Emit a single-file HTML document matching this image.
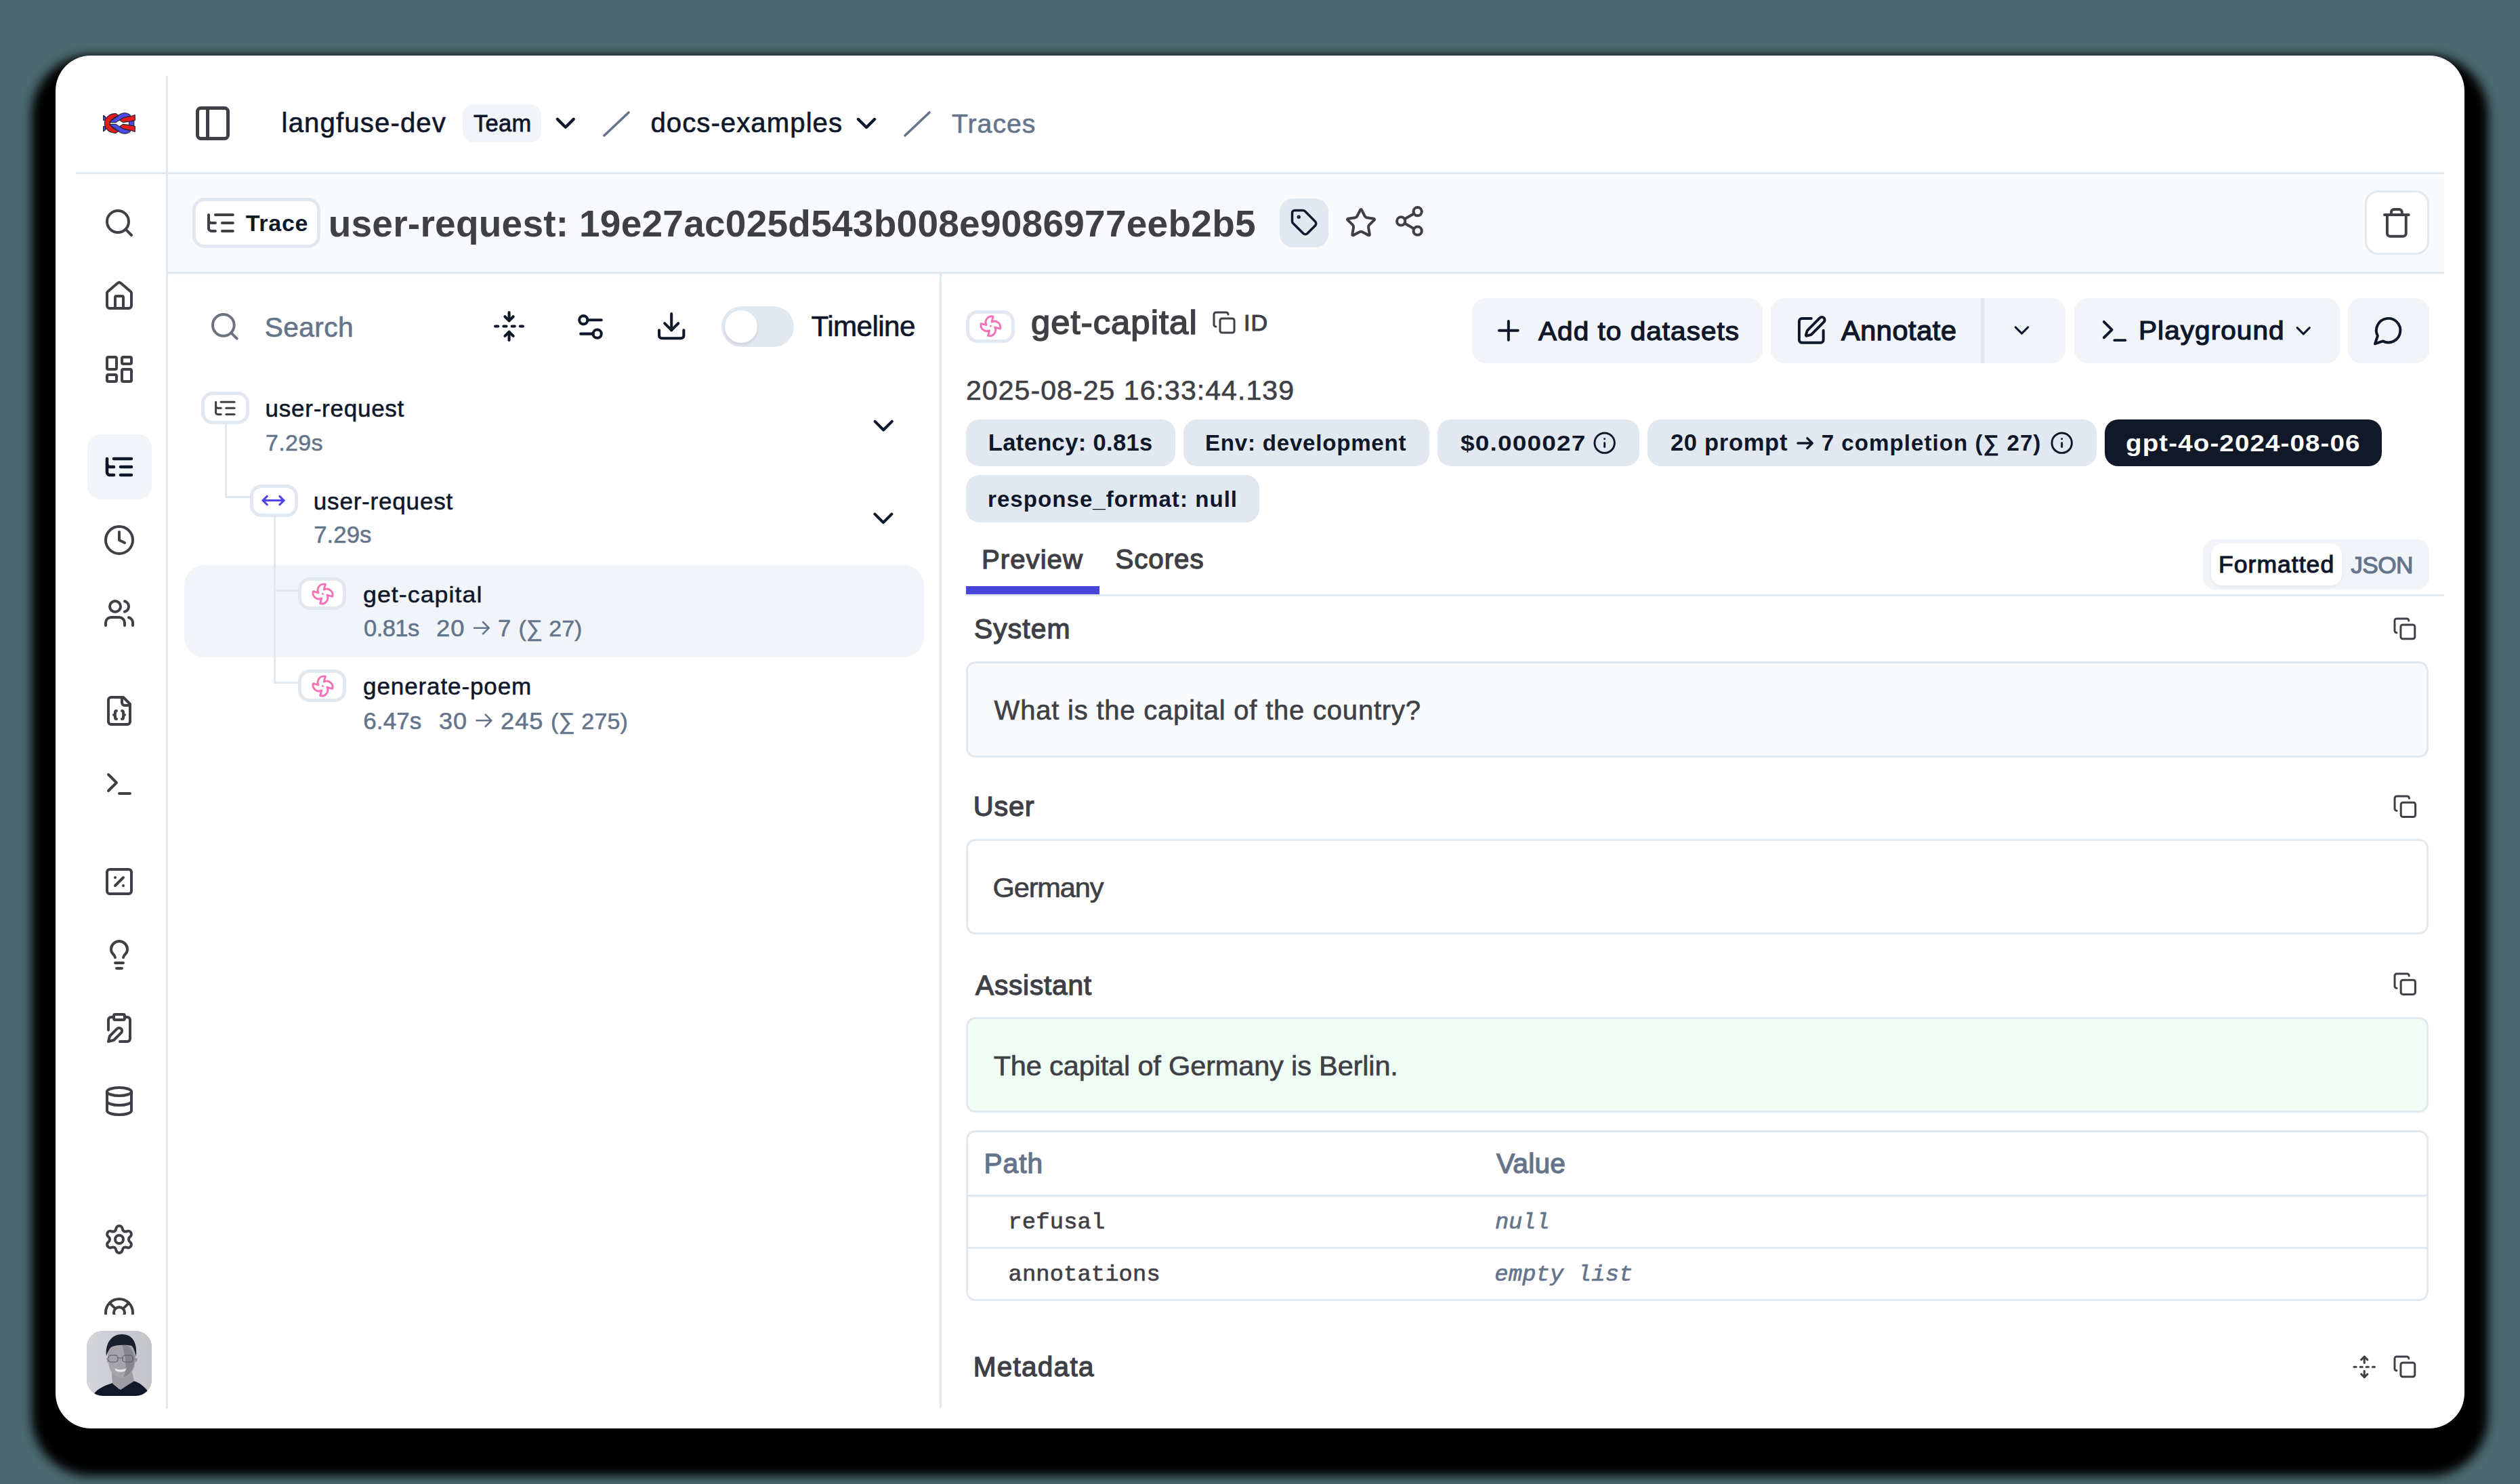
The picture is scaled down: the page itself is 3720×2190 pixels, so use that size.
<!DOCTYPE html>
<html><head><meta charset="utf-8"><title>Langfuse trace</title><style>
html,body{margin:0;padding:0}
body{width:3720px;height:2190px;background:#4b6970;position:relative;overflow:hidden;font-family:'Liberation Sans',sans-serif}
#win{position:absolute;left:82px;top:82px;width:3556px;height:2026px;background:#fff;border-radius:52px;box-shadow:0 35px 15px 35px #000}
.t{position:absolute;white-space:pre;line-height:1}
.b{position:absolute;box-sizing:border-box}
.i{position:absolute;overflow:visible}
</style></head>
<body>
<div id="win"></div>
<div class="b" style="left:245.00px;top:112.00px;width:3.00px;height:1966.00px;background:#e2e8f0;border-radius:0px"></div>
<div class="b" style="left:112.00px;top:254.00px;width:3496.00px;height:3.00px;background:#e2e8f0;border-radius:0px"></div>
<svg class="i" style="left:152px;top:166px" width="48" height="32" viewBox="0 0 48 32">
<g stroke="#23232e" stroke-width="1.1" stroke-linejoin="round">
<path d="M0.6 4.2 L3.9 6.8 L4.2 11.2 L0.6 11.4 Z" fill="#4b4ae6"/>
<path d="M0.6 20.6 L4.2 20.8 L3.9 25.2 L0.6 27.8 Z" fill="#4b4ae6"/>
<path d="M38.4 11.6 L45.8 11.6 L45.8 20.4 L38.4 20.4 Z" fill="#4b4ae6"/>
<path d="M19 1.6 C9 1.6 2.4 8 2.4 16 C2.4 24 9 30.4 19 30.4 L23.2 27.6 C17.5 25.8 13.2 22 10.2 18.2 L10.2 13.8 C13.2 10 17.5 6.2 23.2 4.4 Z" fill="#e11d1d"/>
<path d="M10.2 13.8 L22.4 4.8 C25.6 2.2 28.8 0.8 32 0.8 C36 0.8 39.2 2.4 41.4 5.6 C37 6 31 6.6 27.4 9.4 L19.2 14.6 L10.2 14.6 Z" fill="#4b4ae6"/>
<path d="M10.2 18.2 L22.4 27.2 C25.6 29.8 28.8 31.2 32 31.2 C36 31.2 39.2 29.6 41.4 26.4 C37 26 31 25.4 27.4 22.6 L19.2 17.4 L10.2 17.4 Z" fill="#4b4ae6"/>
<path d="M24.8 11.6 C28 8.2 33 6.4 41 5.8 L47.2 3.6 L47.4 11.2 L45.6 12 L38.6 13.4 L29.4 14.6 Z" fill="#e11d1d"/>
<path d="M24.8 20.4 C28 23.8 33 25.6 41 26.2 L47.2 28.4 L47.4 20.8 L45.6 20 L38.6 18.6 L29.4 17.4 Z" fill="#e11d1d"/>
</g></svg>
<div class="b" style="left:128.50px;top:641.00px;width:95.50px;height:96.00px;background:#f1f5f9;border-radius:20px"></div>
<svg class="i" style="left:152px;top:305px" width="48" height="48" viewBox="0 0 24 24" fill="none" stroke="#3f3f46" stroke-width="2" stroke-linecap="round" stroke-linejoin="round"><circle cx="11" cy="11" r="8"/><path d="m21 21-4.3-4.3"/></svg>
<svg class="i" style="left:152px;top:413px" width="48" height="48" viewBox="0 0 24 24" fill="none" stroke="#3f3f46" stroke-width="2" stroke-linecap="round" stroke-linejoin="round"><path d="M15 21v-8a1 1 0 0 0-1-1h-4a1 1 0 0 0-1 1v8"/><path d="M3 10a2 2 0 0 1 .709-1.528l7-5.999a2 2 0 0 1 2.582 0l7 5.999A2 2 0 0 1 21 10v9a2 2 0 0 1-2 2H5a2 2 0 0 1-2-2z"/></svg>
<svg class="i" style="left:152px;top:521px" width="48" height="48" viewBox="0 0 24 24" fill="none" stroke="#3f3f46" stroke-width="2" stroke-linecap="round" stroke-linejoin="round"><rect width="7" height="9" x="3" y="3" rx="1"/><rect width="7" height="5" x="14" y="3" rx="1"/><rect width="7" height="9" x="14" y="12" rx="1"/><rect width="7" height="5" x="3" y="16" rx="1"/></svg>
<svg class="i" style="left:152px;top:665px" width="48" height="48" viewBox="0 0 24 24" fill="none" stroke="#0f172a" stroke-width="2.3" stroke-linecap="round" stroke-linejoin="round"><path d="M21 12h-8"/><path d="M21 6H8"/><path d="M21 18h-8"/><path d="M3 6v4c0 1.1.9 2 2 2h3"/><path d="M3 10v6c0 1.1.9 2 2 2h3"/></svg>
<svg class="i" style="left:152px;top:773px" width="48" height="48" viewBox="0 0 24 24" fill="none" stroke="#3f3f46" stroke-width="2" stroke-linecap="round" stroke-linejoin="round"><circle cx="12" cy="12" r="10"/><polyline points="12 6 12 12 16 14"/></svg>
<svg class="i" style="left:152px;top:881px" width="48" height="48" viewBox="0 0 24 24" fill="none" stroke="#3f3f46" stroke-width="2" stroke-linecap="round" stroke-linejoin="round"><path d="M16 21v-2a4 4 0 0 0-4-4H6a4 4 0 0 0-4 4v2"/><circle cx="9" cy="7" r="4"/><path d="M22 21v-2a4 4 0 0 0-3-3.87"/><path d="M16 3.13a4 4 0 0 1 0 7.75"/></svg>
<svg class="i" style="left:152px;top:1025px" width="48" height="48" viewBox="0 0 24 24" fill="none" stroke="#3f3f46" stroke-width="2" stroke-linecap="round" stroke-linejoin="round"><path d="M15 2H6a2 2 0 0 0-2 2v16a2 2 0 0 0 2 2h12a2 2 0 0 0 2-2V7Z"/><path d="M14 2v4a2 2 0 0 0 2 2h4"/><path d="M10 12a1 1 0 0 0-1 1v1a1 1 0 0 1-1 1 1 1 0 0 1 1 1v1a1 1 0 0 0 1 1"/><path d="M14 18a1 1 0 0 0 1-1v-1a1 1 0 0 1 1-1 1 1 0 0 1-1-1v-1a1 1 0 0 0-1-1"/></svg>
<svg class="i" style="left:152px;top:1133px" width="48" height="48" viewBox="0 0 24 24" fill="none" stroke="#3f3f46" stroke-width="2" stroke-linecap="round" stroke-linejoin="round"><polyline points="4 17 10 11 4 5"/><line x1="12" x2="20" y1="19" y2="19"/></svg>
<svg class="i" style="left:152px;top:1277px" width="48" height="48" viewBox="0 0 24 24" fill="none" stroke="#3f3f46" stroke-width="2" stroke-linecap="round" stroke-linejoin="round"><rect width="18" height="18" x="3" y="3" rx="2"/><path d="m15 9-6 6"/><path d="M9 9h.01"/><path d="M15 15h.01"/></svg>
<svg class="i" style="left:152px;top:1385px" width="48" height="48" viewBox="0 0 24 24" fill="none" stroke="#3f3f46" stroke-width="2" stroke-linecap="round" stroke-linejoin="round"><path d="M15 14c.2-1 .7-1.7 1.5-2.5 1-.9 1.5-2.2 1.5-3.5A6 6 0 0 0 6 8c0 1 .2 2.2 1.5 3.5.7.7 1.3 1.5 1.5 2.5"/><path d="M9 18h6"/><path d="M10 22h4"/></svg>
<svg class="i" style="left:152px;top:1493px" width="48" height="48" viewBox="0 0 24 24" fill="none" stroke="#3f3f46" stroke-width="2" stroke-linecap="round" stroke-linejoin="round"><rect width="8" height="4" x="8" y="2" rx="1"/><path d="M10.4 12.6a2 2 0 0 1 3 3L8 21l-4 1 1-4Z"/><path d="M16 4h2a2 2 0 0 1 2 2v14a2 2 0 0 1-2 2h-5.5"/><path d="M4 13.5V6a2 2 0 0 1 2-2h2"/></svg>
<svg class="i" style="left:152px;top:1601px" width="48" height="48" viewBox="0 0 24 24" fill="none" stroke="#3f3f46" stroke-width="2" stroke-linecap="round" stroke-linejoin="round"><ellipse cx="12" cy="5" rx="9" ry="3"/><path d="M3 5V19A9 3 0 0 0 21 19V5"/><path d="M3 12A9 3 0 0 0 21 12"/></svg>
<svg class="i" style="left:152px;top:1805px" width="48" height="48" viewBox="0 0 24 24" fill="none" stroke="#3f3f46" stroke-width="2" stroke-linecap="round" stroke-linejoin="round"><path d="M9.671 4.136a2.34 2.34 0 0 1 4.659 0 2.34 2.34 0 0 0 3.319 1.915 2.34 2.34 0 0 1 2.33 4.033 2.34 2.34 0 0 0 0 3.831 2.34 2.34 0 0 1-2.33 4.033 2.34 2.34 0 0 0-3.319 1.915 2.34 2.34 0 0 1-4.659 0 2.34 2.34 0 0 0-3.32-1.915 2.34 2.34 0 0 1-2.33-4.033 2.34 2.34 0 0 0 0-3.831A2.34 2.34 0 0 1 6.35 6.051a2.34 2.34 0 0 0 3.319-1.915"/><circle cx="12" cy="12" r="3"/></svg>
<div class="b" style="left:140px;top:1900px;width:80px;height:40px;overflow:hidden"><svg class="i" style="left:12px;top:13px" width="48" height="48" viewBox="0 0 24 24" fill="none" stroke="#3f3f46" stroke-width="2" stroke-linecap="round" stroke-linejoin="round"><circle cx="12" cy="12" r="10"/><path d="m4.93 4.93 4.24 4.24"/><path d="m14.83 9.17 4.24-4.24"/><path d="m14.83 14.83 4.24 4.24"/><path d="m9.17 14.83-4.24 4.24"/><circle cx="12" cy="12" r="4"/></svg></div>
<div class="b" style="left:128px;top:1964px;width:96px;height:96px;border-radius:24px;overflow:hidden;background:#c8c9ce">
<svg width="96" height="96" viewBox="0 0 96 96" style="position:absolute;left:0;top:0">
<defs><linearGradient id="avbg" x1="0" x2="1" y1="0" y2="0"><stop offset="0" stop-color="#d3d5da"/><stop offset="0.45" stop-color="#cbcdd2"/><stop offset="1" stop-color="#c4c5ca"/></linearGradient></defs>
<rect width="96" height="96" fill="url(#avbg)"/>
<path d="M9 96 C12 88 24 81 38 77 L48 86 L70 74 C80 77 90 86 94 96 Z" fill="#121829"/>
<path d="M37 62 L67 60 L70 74 L50 87 L38 78 Z" fill="#9c9ca2"/>
<path d="M31 40 C30 22 38 13 52 13 C66 13 73 22 72 40 C72 56 66 68 52 69 C38 69 32 56 31 40 Z" fill="#a4a4aa"/>
<path d="M52 20 C62 20 70 28 71 42 C70 56 64 66 54 68 C60 58 58 40 52 20 Z" fill="#86868e"/>
<path d="M29 37 C27 18 37 5 52 5 C67 5 75 16 73 38 C71 30 69 24 66 22 C58 20 44 20 36 24 C33 27 31 31 29 37 Z" fill="#1a1f2e"/>
<rect x="32" y="36" width="14" height="10" rx="4" fill="none" stroke="#5a5a62" stroke-width="1.2"/><rect x="53" y="36" width="15" height="10" rx="4" fill="none" stroke="#5a5a62" stroke-width="1.2"/><path d="M46 40 L53 40" stroke="#5a5a62" stroke-width="1.2"/>
<path d="M41 55 C46 58 54 58 59 55 L57 59 C53 61 47 61 43 59 Z" fill="#e8e8ea"/>
<path d="M29 40 L31 48 L33 40 Z M71 40 L73 47 L75 41 Z" fill="#8e8e94"/>
</svg></div>
<svg class="i" style="left:284.00px;top:151.70px" width="60.00" height="60.00" viewBox="0 0 24 24" fill="none" stroke="#3f3f46" stroke-width="2" stroke-linecap="round" stroke-linejoin="round"><rect width="18" height="18" x="3" y="3" rx="2"/><path d="M9 3v18"/></svg>
<div class="b" style="left:683.00px;top:154.00px;width:116.00px;height:55.50px;background:#f1f5f9;border-radius:16px"></div>
<svg class="i" style="left:810.97px;top:158.17px" width="47.66" height="47.66" viewBox="0 0 24 24" fill="none" stroke="#0f172a" stroke-width="2.2" stroke-linecap="round" stroke-linejoin="round"><path d="m6 9 6 6 6-6"/></svg>
<svg class="i" style="left:885px;top:158px" width="50" height="50" viewBox="0 0 50 50"><path d="M7 42 L43 8" stroke="#64748b" stroke-width="3.6" stroke-linecap="round"/></svg>
<svg class="i" style="left:1255.00px;top:158.00px" width="48.00" height="48.00" viewBox="0 0 24 24" fill="none" stroke="#0f172a" stroke-width="2.2" stroke-linecap="round" stroke-linejoin="round"><path d="m6 9 6 6 6-6"/></svg>
<svg class="i" style="left:1329px;top:158px" width="50" height="50" viewBox="0 0 50 50"><path d="M7 42 L43 8" stroke="#64748b" stroke-width="3.6" stroke-linecap="round"/></svg>
<div class="b" style="left:248.00px;top:257.00px;width:3360.00px;height:144.00px;background:#f8fafc;border-radius:0px"></div>
<div class="b" style="left:248.00px;top:401.00px;width:3360.00px;height:3.00px;background:#e2e8f0;border-radius:0px;box-shadow:0 3px 6px rgba(15,23,42,0.035)"></div>
<div class="b" style="left:284.20px;top:292.20px;width:188.50px;height:73.40px;background:#fff;border-radius:18px;border:5.5px solid #e2e8f0"></div>
<svg class="i" style="left:302.02px;top:305.02px" width="47.85" height="47.85" viewBox="0 0 24 24" fill="none" stroke="#3f3f46" stroke-width="2" stroke-linecap="round" stroke-linejoin="round"><path d="M21 12h-8"/><path d="M21 6H8"/><path d="M21 18h-8"/><path d="M3 6v4c0 1.1.9 2 2 2h3"/><path d="M3 10v6c0 1.1.9 2 2 2h3"/></svg>
<div class="b" style="left:1889.00px;top:292.80px;width:72.00px;height:72.20px;background:#e2e8f0;border-radius:20px"></div>
<svg class="i" style="left:1903.61px;top:307.36px" width="42.27" height="42.27" viewBox="0 0 24 24" fill="none" stroke="#0f172a" stroke-width="2" stroke-linecap="round" stroke-linejoin="round"><path d="M12.586 2.586A2 2 0 0 0 11.172 2H4a2 2 0 0 0-2 2v7.172a2 2 0 0 0 .586 1.414l8.704 8.704a2.426 2.426 0 0 0 3.42 0l6.58-6.58a2.426 2.426 0 0 0 0-3.42z"/><circle cx="7.5" cy="7.5" r=".5" fill="currentColor"/></svg>
<svg class="i" style="left:1984.80px;top:304.90px" width="48.11" height="48.11" viewBox="0 0 24 24" fill="none" stroke="#3f3f46" stroke-width="2" stroke-linecap="round" stroke-linejoin="round"><path d="M11.525 2.295a.53.53 0 0 1 .95 0l2.31 4.679a2.123 2.123 0 0 0 1.595 1.16l5.166.756a.53.53 0 0 1 .294.904l-3.736 3.638a2.123 2.123 0 0 0-.611 1.878l.882 5.14a.53.53 0 0 1-.771.56l-4.618-2.428a2.122 2.122 0 0 0-1.973 0L6.396 21.01a.53.53 0 0 1-.77-.56l.881-5.139a2.122 2.122 0 0 0-.611-1.879L2.16 9.795a.53.53 0 0 1 .294-.906l5.165-.755a2.122 2.122 0 0 0 1.597-1.16z"/></svg>
<svg class="i" style="left:2056.33px;top:302.08px" width="48.85" height="48.85" viewBox="0 0 24 24" fill="none" stroke="#3f3f46" stroke-width="2" stroke-linecap="round" stroke-linejoin="round"><circle cx="18" cy="5" r="3"/><circle cx="6" cy="12" r="3"/><circle cx="18" cy="19" r="3"/><line x1="8.59" x2="15.42" y1="13.51" y2="17.49"/><line x1="15.41" x2="8.59" y1="6.51" y2="10.49"/></svg>
<div class="b" style="left:3490.50px;top:281.30px;width:95.10px;height:94.70px;background:#fff;border-radius:20px;border:3px solid #e2e8f0"></div>
<svg class="i" style="left:3514.02px;top:305.02px" width="47.66" height="47.66" viewBox="0 0 24 24" fill="none" stroke="#3f3f46" stroke-width="2" stroke-linecap="round" stroke-linejoin="round"><path d="M3 6h18"/><path d="M19 6v14c0 1-1 2-2 2H7c-1 0-2-1-2-2V6"/><path d="M8 6V4c0-1 1-2 2-2h4c1 0 2 1 2 2v2"/></svg>
<div class="b" style="left:1387.00px;top:404.00px;width:3.00px;height:1674.00px;background:#e2e8f0;border-radius:0px"></div>
<svg class="i" style="left:307.63px;top:457.63px" width="47.64" height="47.64" viewBox="0 0 24 24" fill="none" stroke="#6b7280" stroke-width="2" stroke-linecap="round" stroke-linejoin="round"><circle cx="11" cy="11" r="8"/><path d="m21 21-4.3-4.3"/></svg>
<svg class="i" style="left:726.95px;top:456.95px" width="49.09" height="49.09" viewBox="0 0 24 24" fill="none" stroke="#0f172a" stroke-width="2" stroke-linecap="round" stroke-linejoin="round"><path d="M12 22v-6"/><path d="M12 8V2"/><path d="M4 12H2"/><path d="M10 12H8"/><path d="M16 12h-2"/><path d="M22 12h-2"/><path d="m15 19-3-3-3 3"/><path d="m15 5-3 3-3-3"/></svg>
<svg class="i" style="left:847.03px;top:457.73px" width="48.93" height="48.93" viewBox="0 0 24 24" fill="none" stroke="#0f172a" stroke-width="2" stroke-linecap="round" stroke-linejoin="round"><path d="M20 7h-9"/><path d="M14 17H5"/><circle cx="17" cy="17" r="3"/><circle cx="7" cy="7" r="3"/></svg>
<svg class="i" style="left:967.29px;top:457.24px" width="48.42" height="48.42" viewBox="0 0 24 24" fill="none" stroke="#0f172a" stroke-width="2" stroke-linecap="round" stroke-linejoin="round"><path d="M21 15v4a2 2 0 0 1-2 2H5a2 2 0 0 1-2-2v-4"/><polyline points="7 10 12 15 17 10"/><line x1="12" x2="12" y1="15" y2="3"/></svg>
<div class="b" style="left:1064.70px;top:451.60px;width:107.30px;height:60.20px;background:#e2e8f0;border-radius:30px"></div>
<div class="b" style="left:1069.90px;top:457.90px;width:48.00px;height:48.00px;background:#fff;border-radius:24px;box-shadow:0 3px 4px rgba(15,23,42,0.10)"></div>
<div class="b" style="left:272.00px;top:834.00px;width:1091.60px;height:135.80px;background:#f1f5f9;border-radius:30px"></div>
<div class="b" style="left:332.00px;top:625.00px;width:3.00px;height:110.30px;background:#e2e8f0;border-radius:0px"></div>
<div class="b" style="left:332.00px;top:732.30px;width:38.00px;height:3.00px;background:#e2e8f0;border-radius:0px"></div>
<div class="b" style="left:404.00px;top:762.00px;width:3.00px;height:247.20px;background:#e2e8f0;border-radius:0px"></div>
<div class="b" style="left:404.00px;top:869.50px;width:38.00px;height:3.00px;background:#e2e8f0;border-radius:0px"></div>
<div class="b" style="left:404.00px;top:1006.20px;width:38.00px;height:3.00px;background:#e2e8f0;border-radius:0px"></div>
<div class="b" style="left:296.50px;top:578.00px;width:71.00px;height:47.70px;background:#fff;border-radius:17px;border:5px solid #e2e8f0"></div>
<div class="b" style="left:369.00px;top:715.00px;width:70.70px;height:47.50px;background:#fff;border-radius:17px;border:5px solid #e2e8f0"></div>
<div class="b" style="left:440.40px;top:852.30px;width:70.60px;height:47.70px;background:#fff;border-radius:17px;border:5px solid #e2e8f0"></div>
<div class="b" style="left:440.40px;top:988.00px;width:70.60px;height:47.50px;background:#fff;border-radius:17px;border:5px solid #e2e8f0"></div>
<svg class="i" style="left:313.55px;top:583.75px" width="36.61" height="36.61" viewBox="0 0 24 24" fill="none" stroke="#3f3f46" stroke-width="2" stroke-linecap="round" stroke-linejoin="round"><path d="M21 12h-8"/><path d="M21 6H8"/><path d="M21 18h-8"/><path d="M3 6v4c0 1.1.9 2 2 2h3"/><path d="M3 10v6c0 1.1.9 2 2 2h3"/></svg>
<svg class="i" style="left:385.43px;top:720.18px" width="37.15" height="37.15" viewBox="0 0 24 24" fill="none" stroke="#4f46e5" stroke-width="2" stroke-linecap="round" stroke-linejoin="round"><polyline points="18 8 22 12 18 16"/><polyline points="6 8 2 12 6 16"/><line x1="2" x2="22" y1="12" y2="12"/></svg>
<svg class="i" style="left:458.55px;top:858.55px" width="34.91" height="34.91" viewBox="0 0 24 24" fill="none" stroke="#f472b6" stroke-width="2" stroke-linecap="round" stroke-linejoin="round"><path d="M10.827 16.379a6.082 6.082 0 0 1-8.618-7.002l5.412 1.45a6.082 6.082 0 0 1 7.002-8.618l-1.45 5.412a6.082 6.082 0 0 1 8.618 7.002l-5.412-1.45a6.082 6.082 0 0 1-7.002 8.618l1.45-5.412Z"/><path d="M12 12v.01"/></svg>
<svg class="i" style="left:458.55px;top:994.55px" width="34.91" height="34.91" viewBox="0 0 24 24" fill="none" stroke="#f472b6" stroke-width="2" stroke-linecap="round" stroke-linejoin="round"><path d="M10.827 16.379a6.082 6.082 0 0 1-8.618-7.002l5.412 1.45a6.082 6.082 0 0 1 7.002-8.618l-1.45 5.412a6.082 6.082 0 0 1 8.618 7.002l-5.412-1.45a6.082 6.082 0 0 1-7.002 8.618l1.45-5.412Z"/><path d="M12 12v.01"/></svg>
<svg class="i" style="left:1278.67px;top:602.52px" width="50.36" height="50.36" viewBox="0 0 24 24" fill="none" stroke="#0f172a" stroke-width="2" stroke-linecap="round" stroke-linejoin="round"><path d="m6 9 6 6 6-6"/></svg>
<svg class="i" style="left:1278.97px;top:739.62px" width="49.76" height="49.76" viewBox="0 0 24 24" fill="none" stroke="#0f172a" stroke-width="2" stroke-linecap="round" stroke-linejoin="round"><path d="m6 9 6 6 6-6"/></svg>
<div class="b" style="left:1426.00px;top:458.00px;width:72.00px;height:47.70px;background:#fff;border-radius:17px;border:5px solid #e2e8f0"></div>
<svg class="i" style="left:1444.68px;top:464.43px" width="34.64" height="34.64" viewBox="0 0 24 24" fill="none" stroke="#f472b6" stroke-width="2" stroke-linecap="round" stroke-linejoin="round"><path d="M10.827 16.379a6.082 6.082 0 0 1-8.618-7.002l5.412 1.45a6.082 6.082 0 0 1 7.002-8.618l-1.45 5.412a6.082 6.082 0 0 1 8.618 7.002l-5.412-1.45a6.082 6.082 0 0 1-7.002 8.618l1.45-5.412Z"/><path d="M12 12v.01"/></svg>
<svg class="i" style="left:1789.17px;top:458.22px" width="36.05" height="36.05" viewBox="0 0 24 24" fill="none" stroke="#3f3f46" stroke-width="2" stroke-linecap="round" stroke-linejoin="round"><rect width="14" height="14" x="8" y="8" rx="2" ry="2"/><path d="M4 16c-1.1 0-2-.9-2-2V4c0-1.1.9-2 2-2h10c1.1 0 2 .9 2 2"/></svg>
<div class="b" style="left:2172.90px;top:440.00px;width:428.80px;height:96.00px;background:#f1f5f9;border-radius:20px"></div>
<div class="b" style="left:2614.00px;top:440.00px;width:435.40px;height:96.00px;background:#f1f5f9;border-radius:20px"></div>
<div class="b" style="left:3062.00px;top:440.00px;width:391.70px;height:96.00px;background:#f1f5f9;border-radius:20px"></div>
<div class="b" style="left:3465.70px;top:440.00px;width:120.00px;height:96.00px;background:#f1f5f9;border-radius:20px"></div>
<div class="b" style="left:2923.70px;top:440.00px;width:6.30px;height:96.00px;background:#e2e8f0;border-radius:0px"></div>
<svg class="i" style="left:2203.15px;top:464.35px" width="47.70" height="47.70" viewBox="0 0 24 24" fill="none" stroke="#0f172a" stroke-width="2" stroke-linecap="round" stroke-linejoin="round"><path d="M5 12h14"/><path d="M12 5v14"/></svg>
<svg class="i" style="left:2650.21px;top:463.84px" width="47.60" height="47.60" viewBox="0 0 24 24" fill="none" stroke="#0f172a" stroke-width="2" stroke-linecap="round" stroke-linejoin="round"><path d="M12 3H5a2 2 0 0 0-2 2v14a2 2 0 0 0 2 2h14a2 2 0 0 0 2-2v-7"/><path d="M18.375 2.625a1 1 0 0 1 3 3l-9.013 9.014a2 2 0 0 1-.853.505l-2.873.84a.5.5 0 0 1-.62-.62l.84-2.873a2 2 0 0 1 .506-.852z"/></svg>
<svg class="i" style="left:2965.50px;top:469.35px" width="37.01" height="37.01" viewBox="0 0 24 24" fill="none" stroke="#0f172a" stroke-width="2" stroke-linecap="round" stroke-linejoin="round"><path d="m6 9 6 6 6-6"/></svg>
<svg class="i" style="left:3098.38px;top:464.53px" width="46.95" height="46.95" viewBox="0 0 24 24" fill="none" stroke="#0f172a" stroke-width="2" stroke-linecap="round" stroke-linejoin="round"><polyline points="4 17 10 11 4 5"/><line x1="12" x2="20" y1="19" y2="19"/></svg>
<svg class="i" style="left:3381.75px;top:469.60px" width="36.49" height="36.49" viewBox="0 0 24 24" fill="none" stroke="#0f172a" stroke-width="2" stroke-linecap="round" stroke-linejoin="round"><path d="m6 9 6 6 6-6"/></svg>
<svg class="i" style="left:3502.21px;top:463.89px" width="47.26" height="47.26" viewBox="0 0 24 24" fill="none" stroke="#0f172a" stroke-width="2" stroke-linecap="round" stroke-linejoin="round"><path d="M7.9 20A9 9 0 1 0 4 16.1L2 22Z"/></svg>
<div class="b" style="left:1426.20px;top:619.00px;width:308.70px;height:68.50px;background:#e2e8f0;border-radius:20px"></div>
<div class="b" style="left:1747.00px;top:619.00px;width:362.70px;height:68.50px;background:#e2e8f0;border-radius:20px"></div>
<div class="b" style="left:2122.30px;top:619.00px;width:297.70px;height:68.50px;background:#e2e8f0;border-radius:20px"></div>
<div class="b" style="left:2431.80px;top:619.00px;width:662.80px;height:68.50px;background:#e2e8f0;border-radius:20px"></div>
<div class="b" style="left:1426.20px;top:700.50px;width:432.50px;height:70.50px;background:#e2e8f0;border-radius:20px"></div>
<div class="b" style="left:3106.80px;top:619.00px;width:409.00px;height:68.50px;background:#111827;border-radius:20px"></div>
<svg class="i" style="left:2351.33px;top:635.93px" width="35.35" height="35.35" viewBox="0 0 24 24" fill="none" stroke="#0f172a" stroke-width="2" stroke-linecap="round" stroke-linejoin="round"><circle cx="12" cy="12" r="10"/><path d="M12 16v-4"/><path d="M12 8h.01"/></svg>
<svg class="i" style="left:3026.33px;top:635.93px" width="35.35" height="35.35" viewBox="0 0 24 24" fill="none" stroke="#0f172a" stroke-width="2" stroke-linecap="round" stroke-linejoin="round"><circle cx="12" cy="12" r="10"/><path d="M12 16v-4"/><path d="M12 8h.01"/></svg>
<div class="b" style="left:1426.00px;top:877.00px;width:2182.00px;height:3.00px;background:#e2e8f0;border-radius:0px"></div>
<div class="b" style="left:1426.00px;top:865.00px;width:196.60px;height:12.00px;background:#4845dd;border-radius:0px"></div>
<div class="b" style="left:3252.00px;top:796.00px;width:334.00px;height:74.00px;background:#f1f5f9;border-radius:18px"></div>
<div class="b" style="left:3263.80px;top:801.80px;width:193.50px;height:62.40px;background:#fff;border-radius:16px;box-shadow:0 2px 4px rgba(0,0,0,0.06)"></div>
<svg class="i" style="left:3532.11px;top:909.81px" width="35.78" height="35.78" viewBox="0 0 24 24" fill="none" stroke="#3f3f46" stroke-width="2" stroke-linecap="round" stroke-linejoin="round"><rect width="14" height="14" x="8" y="8" rx="2" ry="2"/><path d="M4 16c-1.1 0-2-.9-2-2V4c0-1.1.9-2 2-2h10c1.1 0 2 .9 2 2"/></svg>
<div class="b" style="left:1426.30px;top:976.40px;width:2158.70px;height:141.20px;background:#f8fafc;border-radius:14px;border:3px solid #e2e8f0"></div>
<svg class="i" style="left:3531.67px;top:1171.67px" width="36.65" height="36.65" viewBox="0 0 24 24" fill="none" stroke="#3f3f46" stroke-width="2" stroke-linecap="round" stroke-linejoin="round"><rect width="14" height="14" x="8" y="8" rx="2" ry="2"/><path d="M4 16c-1.1 0-2-.9-2-2V4c0-1.1.9-2 2-2h10c1.1 0 2 .9 2 2"/></svg>
<div class="b" style="left:1426.30px;top:1238.00px;width:2158.70px;height:141.30px;background:#fff;border-radius:14px;border:3px solid #e2e8f0"></div>
<svg class="i" style="left:3531.78px;top:1433.58px" width="36.44" height="36.44" viewBox="0 0 24 24" fill="none" stroke="#3f3f46" stroke-width="2" stroke-linecap="round" stroke-linejoin="round"><rect width="14" height="14" x="8" y="8" rx="2" ry="2"/><path d="M4 16c-1.1 0-2-.9-2-2V4c0-1.1.9-2 2-2h10c1.1 0 2 .9 2 2"/></svg>
<div class="b" style="left:1426.30px;top:1500.50px;width:2158.70px;height:141.50px;background:#f0fdf4;border-radius:14px;border:3px solid #e2e8f0"></div>
<div class="b" style="left:1426.30px;top:1667.50px;width:2158.70px;height:252.80px;background:#fff;border-radius:14px;border:3px solid #e2e8f0"></div>
<div class="b" style="left:1429.00px;top:1762.50px;width:2153.00px;height:3.00px;background:#e2e8f0;border-radius:0px"></div>
<div class="b" style="left:1429.00px;top:1839.50px;width:2153.00px;height:3.00px;background:#e2e8f0;border-radius:0px"></div>
<svg class="i" style="left:3471.80px;top:1998.75px" width="36.49" height="36.49" viewBox="0 0 24 24" fill="none" stroke="#3f3f46" stroke-width="2" stroke-linecap="round" stroke-linejoin="round"><path d="M12 22v-6"/><path d="M12 8V2"/><path d="M4 12H2"/><path d="M10 12H8"/><path d="M16 12h-2"/><path d="M22 12h-2"/><path d="m15 19-3 3-3-3"/><path d="m15 5-3-3-3 3"/></svg>
<svg class="i" style="left:3532.11px;top:1999.31px" width="35.78" height="35.78" viewBox="0 0 24 24" fill="none" stroke="#3f3f46" stroke-width="2" stroke-linecap="round" stroke-linejoin="round"><rect width="14" height="14" x="8" y="8" rx="2" ry="2"/><path d="M4 16c-1.1 0-2-.9-2-2V4c0-1.1.9-2 2-2h10c1.1 0 2 .9 2 2"/></svg>
<svg class="i" style="left:0;top:0" width="1" height="1"><path d="M700.00 926.70 H721.70 M713.00 918.00 L721.70 926.70 L713.00 935.40" stroke="#64748b" stroke-width="2.6" fill="none" stroke-linecap="round" stroke-linejoin="round"/></svg>
<svg class="i" style="left:0;top:0" width="1" height="1"><path d="M703.50 1063.30 H725.40 M716.70 1054.60 L725.40 1063.30 L716.70 1072.00" stroke="#64748b" stroke-width="2.6" fill="none" stroke-linecap="round" stroke-linejoin="round"/></svg>
<svg class="i" style="left:0;top:0" width="1" height="1"><path d="M2653.90 654.05 H2675.30 M2667.85 646.60 L2675.30 654.05 L2667.85 661.50" stroke="#0f172a" stroke-width="3.4" fill="none" stroke-linecap="round" stroke-linejoin="round"/></svg>
<div class="t" style="left:415.59px;top:161.88px;font-size:40.14px;letter-spacing:1.14px;color:#0f172a;font-family:'Liberation Sans';font-weight:400;-webkit-text-stroke:0.64px #0f172a">langfuse-dev</div>
<div class="t" style="left:699.11px;top:164.98px;font-size:34.49px;letter-spacing:0.24px;color:#0f172a;font-family:'Liberation Sans';font-weight:400;-webkit-text-stroke:0.76px #0f172a">Team</div>
<div class="t" style="left:960.39px;top:161.88px;font-size:40.14px;letter-spacing:1.07px;color:#0f172a;font-family:'Liberation Sans';font-weight:400;-webkit-text-stroke:0.64px #0f172a">docs-examples</div>
<div class="t" style="left:1404.92px;top:163.60px;font-size:38.12px;letter-spacing:1.00px;color:#64748b;font-family:'Liberation Sans';font-weight:400;transform:scaleX(1.0277);transform-origin:0 0;-webkit-text-stroke:0.61px #64748b">Traces</div>
<div class="t" style="left:362.66px;top:312.00px;font-size:34.00px;letter-spacing:0.74px;color:#0f172a;font-family:'Liberation Sans';font-weight:700">Trace</div>
<div class="t" style="left:484.70px;top:303.25px;font-size:55.00px;letter-spacing:0.25px;color:#3f3f46;font-family:'Liberation Sans';font-weight:700">user-request: 19e27ac025d543b008e9086977eeb2b5</div>
<div class="t" style="left:390.77px;top:462.62px;font-size:40.68px;letter-spacing:0.38px;color:#64748b;font-family:'Liberation Sans';font-weight:400;-webkit-text-stroke:0.65px #64748b">Search</div>
<div class="t" style="left:1197.56px;top:460.94px;font-size:42.19px;letter-spacing:-0.56px;color:#0f172a;font-family:'Liberation Sans';font-weight:400;-webkit-text-stroke:0.68px #0f172a">Timeline</div>
<div class="t" style="left:391.60px;top:585.05px;font-size:35.00px;letter-spacing:0.75px;color:#0f172a;font-family:'Liberation Sans';font-weight:400;-webkit-text-stroke:0.56px #0f172a">user-request</div>
<div class="t" style="left:392.00px;top:636.00px;font-size:34.00px;letter-spacing:0.31px;color:#64748b;font-family:'Liberation Sans';font-weight:400;-webkit-text-stroke:0.54px #64748b">7.29s</div>
<div class="t" style="left:462.80px;top:722.45px;font-size:35.00px;letter-spacing:0.81px;color:#0f172a;font-family:'Liberation Sans';font-weight:400;-webkit-text-stroke:0.56px #0f172a">user-request</div>
<div class="t" style="left:463.16px;top:772.39px;font-size:34.71px;letter-spacing:0.09px;color:#64748b;font-family:'Liberation Sans';font-weight:400;-webkit-text-stroke:0.56px #64748b">7.29s</div>
<div class="t" style="left:535.77px;top:860.67px;font-size:33.56px;letter-spacing:1.00px;color:#0f172a;font-family:'Liberation Sans';font-weight:400;transform:scaleX(1.0640);transform-origin:0 0;-webkit-text-stroke:0.54px #0f172a">get-capital</div>
<div class="t" style="left:536.96px;top:909.81px;font-size:34.57px;letter-spacing:-0.55px;color:#64748b;font-family:'Liberation Sans';font-weight:400;-webkit-text-stroke:0.55px #64748b">0.81s</div>
<div class="t" style="left:643.98px;top:909.81px;font-size:34.57px;letter-spacing:1.00px;color:#64748b;font-family:'Liberation Sans';font-weight:400;transform:scaleX(1.0542);transform-origin:0 0;-webkit-text-stroke:0.55px #64748b">20</div>
<div class="t" style="left:734.97px;top:909.81px;font-size:34.57px;letter-spacing:0.40px;color:#64748b;font-family:'Liberation Sans';font-weight:400;-webkit-text-stroke:0.55px #64748b">7</div>
<div class="t" style="left:765.46px;top:910.30px;font-size:34.00px;letter-spacing:-0.06px;color:#64748b;font-family:'Liberation Sans';font-weight:400;-webkit-text-stroke:0.54px #64748b">(∑ 27)</div>
<div class="t" style="left:536.10px;top:995.25px;font-size:35.00px;letter-spacing:0.89px;color:#0f172a;font-family:'Liberation Sans';font-weight:400;-webkit-text-stroke:0.56px #0f172a">generate-poem</div>
<div class="t" style="left:536.25px;top:1046.45px;font-size:35.00px;letter-spacing:0.12px;color:#64748b;font-family:'Liberation Sans';font-weight:400;-webkit-text-stroke:0.56px #64748b">6.47s</div>
<div class="t" style="left:647.72px;top:1046.45px;font-size:35.00px;letter-spacing:1.00px;color:#64748b;font-family:'Liberation Sans';font-weight:400;transform:scaleX(1.0296);transform-origin:0 0;-webkit-text-stroke:0.56px #64748b">30</div>
<div class="t" style="left:738.99px;top:1046.45px;font-size:35.00px;letter-spacing:1.00px;color:#64748b;font-family:'Liberation Sans';font-weight:400;transform:scaleX(1.0329);transform-origin:0 0;-webkit-text-stroke:0.56px #64748b">245</div>
<div class="t" style="left:812.96px;top:1047.30px;font-size:34.00px;letter-spacing:0.13px;color:#64748b;font-family:'Liberation Sans';font-weight:400;-webkit-text-stroke:0.54px #64748b">(∑ 275)</div>
<div class="t" style="left:1522.27px;top:451.93px;font-size:49.73px;letter-spacing:1.00px;color:#3f3f46;font-family:'Liberation Sans';font-weight:400;transform:scaleX(1.0221);transform-origin:0 0;-webkit-text-stroke:1.59px #3f3f46">get-capital</div>
<div class="t" style="left:1835.93px;top:460.76px;font-size:32.75px;letter-spacing:1.00px;color:#3f3f46;font-family:'Liberation Sans';font-weight:400;transform:scaleX(1.0413);transform-origin:0 0;-webkit-text-stroke:1.05px #3f3f46">ID</div>
<div class="t" style="left:2270.60px;top:468.60px;font-size:39.18px;letter-spacing:1.00px;color:#0f172a;font-family:'Liberation Sans';font-weight:400;transform:scaleX(1.0344);transform-origin:0 0;-webkit-text-stroke:1.25px #0f172a">Add to datasets</div>
<div class="t" style="left:2718.00px;top:466.67px;font-size:41.45px;letter-spacing:0.58px;color:#0f172a;font-family:'Liberation Sans';font-weight:400;-webkit-text-stroke:1.33px #0f172a">Annotate</div>
<div class="t" style="left:3156.76px;top:469.05px;font-size:38.77px;letter-spacing:1.00px;color:#0f172a;font-family:'Liberation Sans';font-weight:400;transform:scaleX(1.0459);transform-origin:0 0;-webkit-text-stroke:1.24px #0f172a">Playground</div>
<div class="t" style="left:1425.84px;top:557.48px;font-size:40.14px;letter-spacing:1.00px;color:#3f3f46;font-family:'Liberation Sans';font-weight:400;transform:scaleX(1.0239);transform-origin:0 0;-webkit-text-stroke:0.64px #3f3f46">2025-08-25 16:33:44.139</div>
<div class="t" style="left:1458.83px;top:635.81px;font-size:34.57px;letter-spacing:0.32px;color:#0f172a;font-family:'Liberation Sans';font-weight:700">Latency: 0.81s</div>
<div class="t" style="left:1779.01px;top:637.02px;font-size:33.15px;letter-spacing:0.74px;color:#0f172a;font-family:'Liberation Sans';font-weight:700">Env: development</div>
<div class="t" style="left:2156.13px;top:637.77px;font-size:32.27px;letter-spacing:1.00px;color:#0f172a;font-family:'Liberation Sans';font-weight:700;transform:scaleX(1.1487);transform-origin:0 0">$0.000027</div>
<div class="t" style="left:2465.96px;top:635.81px;font-size:34.57px;letter-spacing:0.67px;color:#0f172a;font-family:'Liberation Sans';font-weight:700">20 prompt</div>
<div class="t" style="left:2688.67px;top:637.02px;font-size:33.15px;letter-spacing:1.02px;color:#0f172a;font-family:'Liberation Sans';font-weight:700">7 completion (∑ 27)</div>
<div class="t" style="left:3138.46px;top:635.75px;font-size:35.00px;letter-spacing:1.00px;color:#ffffff;font-family:'Liberation Sans';font-weight:700;transform:scaleX(1.1019);transform-origin:0 0">gpt-4o-2024-08-06</div>
<div class="t" style="left:1458.01px;top:720.22px;font-size:33.15px;letter-spacing:1.00px;color:#0f172a;font-family:'Liberation Sans';font-weight:700">response_format: null</div>
<div class="t" style="left:1448.79px;top:805.78px;font-size:39.32px;letter-spacing:1.00px;color:#3f3f46;font-family:'Liberation Sans';font-weight:400;transform:scaleX(1.0212);transform-origin:0 0;-webkit-text-stroke:1.26px #3f3f46">Preview</div>
<div class="t" style="left:1646.38px;top:804.84px;font-size:40.42px;letter-spacing:0.90px;color:#3f3f46;font-family:'Liberation Sans';font-weight:400;-webkit-text-stroke:1.29px #3f3f46">Scores</div>
<div class="t" style="left:3275.46px;top:816.39px;font-size:34.25px;letter-spacing:1.00px;color:#0f172a;font-family:'Liberation Sans';font-weight:400;transform:scaleX(1.0370);transform-origin:0 0;-webkit-text-stroke:1.10px #0f172a">Formatted</div>
<div class="t" style="left:3470.35px;top:815.57px;font-size:35.21px;letter-spacing:-0.64px;color:#64748b;font-family:'Liberation Sans';font-weight:400;-webkit-text-stroke:1.13px #64748b">JSON</div>
<div class="t" style="left:1437.97px;top:908.28px;font-size:40.85px;letter-spacing:1.09px;color:#3f3f46;font-family:'Liberation Sans';font-weight:400;-webkit-text-stroke:1.31px #3f3f46">System</div>
<div class="t" style="left:1467.60px;top:1028.20px;font-size:40.00px;letter-spacing:0.79px;color:#3f3f46;font-family:'Liberation Sans';font-weight:400;-webkit-text-stroke:0.64px #3f3f46">What is the capital of the country?</div>
<div class="t" style="left:1436.70px;top:1168.77px;font-size:41.45px;letter-spacing:0.78px;color:#3f3f46;font-family:'Liberation Sans';font-weight:400;-webkit-text-stroke:1.33px #3f3f46">User</div>
<div class="t" style="left:1465.52px;top:1288.96px;font-size:41.57px;letter-spacing:-1.16px;color:#3f3f46;font-family:'Liberation Sans';font-weight:400;-webkit-text-stroke:0.67px #3f3f46">Germany</div>
<div class="t" style="left:1440.00px;top:1433.82px;font-size:40.68px;letter-spacing:0.77px;color:#3f3f46;font-family:'Liberation Sans';font-weight:400;-webkit-text-stroke:1.30px #3f3f46">Assistant</div>
<div class="t" style="left:1466.67px;top:1552.02px;font-size:41.51px;letter-spacing:-0.15px;color:#3f3f46;font-family:'Liberation Sans';font-weight:400;-webkit-text-stroke:0.66px #3f3f46">The capital of Germany is Berlin.</div>
<div class="t" style="left:1452.45px;top:1697.02px;font-size:40.68px;letter-spacing:0.98px;color:#64748b;font-family:'Liberation Sans';font-weight:400;-webkit-text-stroke:1.30px #64748b">Path</div>
<div class="t" style="left:2209.00px;top:1697.02px;font-size:40.68px;letter-spacing:0.21px;color:#64748b;font-family:'Liberation Sans';font-weight:400;-webkit-text-stroke:1.30px #64748b">Value</div>
<div class="t" style="left:1488.28px;top:1788.01px;font-size:33.80px;letter-spacing:0.19px;color:#3f3f46;font-family:'Liberation Mono';font-weight:400;-webkit-text-stroke:0.68px #3f3f46">refusal</div>
<div class="t" style="left:2206.99px;top:1788.01px;font-size:33.80px;letter-spacing:-0.22px;color:#64748b;font-family:'Liberation Mono';font-weight:400;font-style:italic;-webkit-text-stroke:0.68px #64748b">null</div>
<div class="t" style="left:1488.57px;top:1864.91px;font-size:33.80px;letter-spacing:0.10px;color:#3f3f46;font-family:'Liberation Mono';font-weight:400;-webkit-text-stroke:0.68px #3f3f46">annotations</div>
<div class="t" style="left:2206.31px;top:1864.91px;font-size:33.80px;letter-spacing:0.14px;color:#64748b;font-family:'Liberation Mono';font-weight:400;font-style:italic;-webkit-text-stroke:0.68px #64748b">empty list</div>
<div class="t" style="left:1436.76px;top:1996.58px;font-size:40.50px;letter-spacing:1.26px;color:#3f3f46;font-family:'Liberation Sans';font-weight:400;-webkit-text-stroke:1.30px #3f3f46">Metadata</div>
</body></html>
